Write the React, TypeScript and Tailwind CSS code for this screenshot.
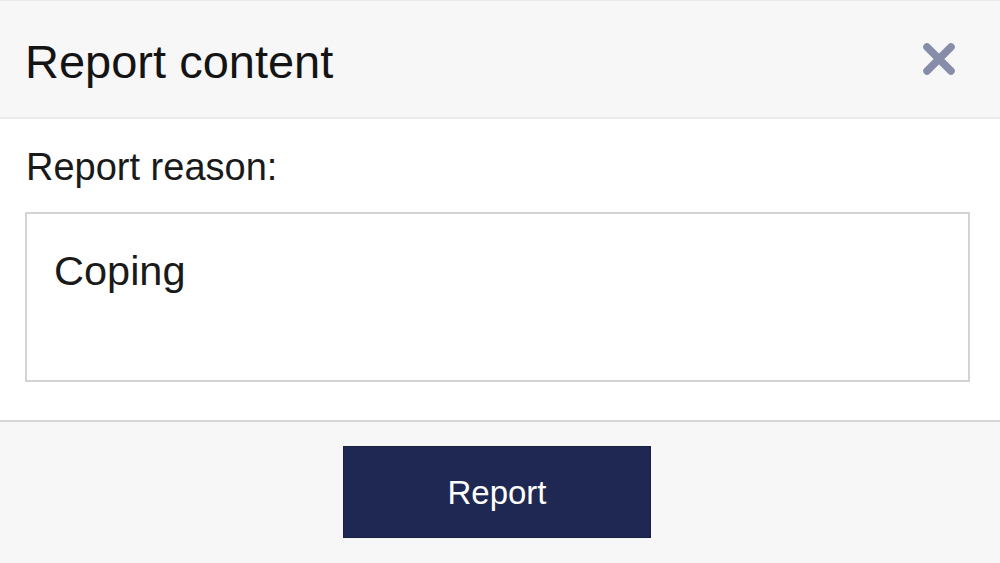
const CloseIcon = () => (
	<svg width="34" height="34" viewBox="0 0 34 34" fill="none">
		<path
			d="M5 5 L29 29 M29 5 L5 29"
			stroke="#878ca9"
			strokeWidth="7.5"
			strokeLinecap="round"
		/>
	</svg>
);

const App = () => {
	return (
		<div
			className="w-[1000px] h-[563px] flex flex-col bg-white text-[#141414] overflow-hidden"
			style={{ fontFamily: '"Liberation Sans", Arial, sans-serif' }}
		>
			{/* HEADER */}
			<div className="h-[119px] shrink-0 flex items-center justify-between bg-[#f7f7f7] border-t border-[#e9e9e9] border-b-2 border-b-[#ebebeb] pl-[25px] pr-[44px] pt-[4px]">
				<h1 className="text-[47px] leading-none">Report content</h1>
				<button className="pb-[4px]">
					<CloseIcon />
				</button>
			</div>

			{/* BODY */}
			<div className="flex-1 flex flex-col pt-[29px] pb-[38px]">
				<label className="pl-[26px] text-[38px] leading-none text-[#1a1a1a]">
					Report reason:
				</label>
				<textarea
					className="mt-[26px] ml-[25px] w-[945px] h-[170px] border-2 border-[#d3d3d3] pl-[27px] pt-[36px] text-[41.5px] leading-none text-[#1a1a1a] resize-none outline-none"
					defaultValue="Coping"
				/>
			</div>

			{/* FOOTER */}
			<div className="h-[143px] shrink-0 bg-[#f7f7f7] border-t-2 border-[#d6d6d6] flex justify-center pt-[24px] pr-[6px]">
				<button className="w-[308px] h-[92px] bg-[#1e2852] border border-[#17203f] text-white text-[33px] leading-none">
					Report
				</button>
			</div>
		</div>
	);
};

export default App;
